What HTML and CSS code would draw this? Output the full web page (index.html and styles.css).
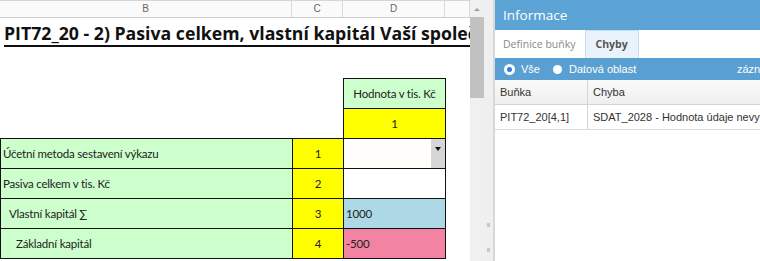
FILE: index.html
```html
<!DOCTYPE html>
<html lang="cs">
<head>
<meta charset="utf-8">
<link rel="stylesheet" href="styles.css">
</head>
<body>
<div class="sheet">
  <div class="colhead">
    <div class="ch">B</div>
    <div class="ch">C</div>
    <div class="ch">D</div>
    <div class="ch"></div>
  </div>
  <div class="title">PIT72_20 - 2) Pasiva celkem, vlastní kapitál Vaší společnosti</div>
  <table class="grid">
    <colgroup><col class="ca"><col class="cc"><col class="cd"></colgroup>
    <tr class="r-head"><td></td><td></td><td class="hval">Hodnota v tis. Kč</td></tr>
    <tr class="r-num"><td></td><td></td><td class="yel ctr">1</td></tr>
    <tr><td class="lab">Účetní metoda sestavení výkazu</td><td class="yel ctr">1</td><td class="sel"><span class="dd"><span class="tri"></span></span></td></tr>
    <tr><td class="lab">Pasiva celkem v tis. Kč</td><td class="yel ctr">2</td><td class="wht"></td></tr>
    <tr><td class="lab l1">Vlastní kapitál ∑</td><td class="yel ctr">3</td><td class="blu">1000</td></tr>
    <tr><td class="lab l2">Základní kapitál</td><td class="yel ctr">4</td><td class="pnk">-500</td></tr>
  </table>
</div>
<div class="vscroll">
  <div class="arrow"></div>
  <div class="thumb"></div>
</div>
<div class="splitter">
  <span class="grip g1"></span>
  <span class="grip g2"></span>
</div>
<div class="panel">
  <div class="ptitle">Informace</div>
  <div class="tabs">
    <div class="tab">Definice buňky</div>
    <div class="tab active">Chyby</div>
  </div>
  <div class="toolbar">
    <label class="radio"><span class="dot on"></span>Vše</label>
    <label class="radio"><span class="dot"></span>Datová oblast</label>
    <span class="zaz">záznamů</span>
  </div>
  <div class="thead">
    <div class="c1">Buňka</div>
    <div class="c2">Chyba</div>
  </div>
  <div class="trow">
    <div class="c1">PIT72_20[4,1]</div>
    <div class="c2">SDAT_2028 - Hodnota údaje nevyhovuje</div>
  </div>
</div>
</body>
</html>
```

FILE: styles.css
```css
html, body {
  margin: 0;
  padding: 0;
}
body {
  display: flex;
  width: 760px;
  height: 261px;
  overflow: hidden;
  background: #fff;
  font-family: "Lato", "Liberation Sans", sans-serif;
}
.sheet {
  width: 470px;
  flex: none;
  overflow: hidden;
  border-top: 1px solid #d6d6d6;
  box-sizing: border-box;
}
.colhead {
  display: grid;
  grid-template-columns: 292px 51px 102px 25px;
  height: 16px;
  border-bottom: 1px solid #cfcfcf;
  background: #fafafa;
}
.ch {
  border-right: 1px solid #dadada;
  font: 10px "Liberation Sans", sans-serif;
  color: #666;
  text-align: center;
  line-height: 16px;
}
.title {
  height: 36px;
  padding-left: 4px;
  white-space: nowrap;
  overflow: hidden;
  font-family: "Open Sans", sans-serif;
  font-weight: 700;
  font-size: 17.7px;
  line-height: 31px;
  color: #111;
  text-decoration: underline;
  text-decoration-thickness: 2px;
  text-underline-offset: 5px;
}
.grid {
  border-collapse: collapse;
  table-layout: fixed;
  margin-top: 24px;
  font-size: 11.5px;
  color: #222;
  letter-spacing: -0.2px;
}
.ca { width: 292px; }
.cc { width: 51px; }
.cd { width: 102px; }
.grid td {
  height: 29px;
  padding: 0 2px;
  border: 1px solid #111;
  position: relative;
}
.r-head td, .r-num td { border: none; }
.r-head td.hval, .r-num td.yel { border: 1px solid #111; }
.hval {
  background: #ccffcc;
  text-align: center;
}
.yel { background: #ffff00; }
.ctr { text-align: center; }
.lab { background: #ccffcc; }
.l1 { padding-left: 8px !important; }
.l2 { padding-left: 15px !important; }
.sel { background: #fffefa; }
.wht { background: #fff; }
.blu { background: #add8e6; }
.pnk { background: #f283a3; }
.dd {
  position: absolute;
  right: 0;
  top: 0;
  bottom: 0;
  width: 14px;
  background: #d6d6d6;
}
.tri {
  position: absolute;
  left: 4px;
  top: 8px;
  border-left: 3px solid transparent;
  border-right: 3px solid transparent;
  border-top: 4px solid #111;
}
.vscroll {
  width: 14px;
  flex: none;
  background: #f0f0f0;
  display: flex;
  flex-direction: column;
}
.arrow {
  height: 17px;
  position: relative;
}
.arrow::after {
  content: "";
  position: absolute;
  left: 4px;
  top: 8px;
  border-left: 3px solid transparent;
  border-right: 3px solid transparent;
  border-bottom: 3px solid #a0a0a0;
}
.thumb {
  height: 81px;
  background: #c1c1c1;
}
.splitter {
  width: 9px;
  flex: none;
  background: #efefef;
  border-right: 2px solid #d8d8d8;
  position: relative;
}
.grip {
  position: absolute;
  left: 3px;
  width: 3px;
  height: 4px;
  background: #c8c8c8;
}
.g1 { top: 223px; }
.g2 { top: 248px; }
.panel {
  flex: 1;
  min-width: 0;
  overflow: hidden;
  font-family: "Liberation Sans", sans-serif;
}
.ptitle {
  height: 30px;
  background: #5ca4d5;
  color: #fff;
  font-family: "Open Sans", sans-serif;
  font-size: 13.5px;
  line-height: 30px;
  padding-left: 8px;
}
.tabs {
  display: flex;
  height: 28px;
  align-items: flex-end;
}
.tab {
  height: 27px;
  line-height: 27px;
  padding: 0 8px;
  font-family: "Open Sans", sans-serif;
  font-size: 10.5px;
  color: #888;
}
.tab.active {
  background: #eaf3fb;
  border: 1px solid #c9dcec;
  border-bottom: none;
  font-weight: 700;
  color: #555;
  padding: 0 10px;
  margin-left: 1px;
}
.toolbar {
  height: 22px;
  background: #5a9fd1;
  display: flex;
  align-items: center;
  padding-left: 10px;
  color: #fff;
  font-size: 11px;
  white-space: nowrap;
  overflow: hidden;
}
.radio {
  display: flex;
  align-items: center;
  margin-right: 13px;
}
.dot {
  width: 9px;
  height: 9px;
  border-radius: 50%;
  background: #fff;
  margin-right: 7px;
  box-sizing: border-box;
}
.dot.on {
  border: 2px solid #fff;
  background: #2f7fd6;
  box-shadow: 0 0 0 1px #fff;
}
.zaz {
  margin-left: auto;
  width: 23px;
  flex: none;
}
.thead, .trow {
  display: flex;
  font-size: 11px;
  color: #333;
  white-space: nowrap;
}
.thead {
  height: 24px;
  line-height: 24px;
  background: linear-gradient(#fafafa, #efefef);
  border-bottom: 1px solid #d4d4d4;
}
.trow {
  height: 24px;
  line-height: 24px;
  border-bottom: 1px solid #dcdcdc;
}
.c1 {
  width: 87px;
  flex: none;
  padding-left: 5px;
  border-right: 1px solid #d4d4d4;
}
.c2 {
  padding-left: 5px;
}
```
